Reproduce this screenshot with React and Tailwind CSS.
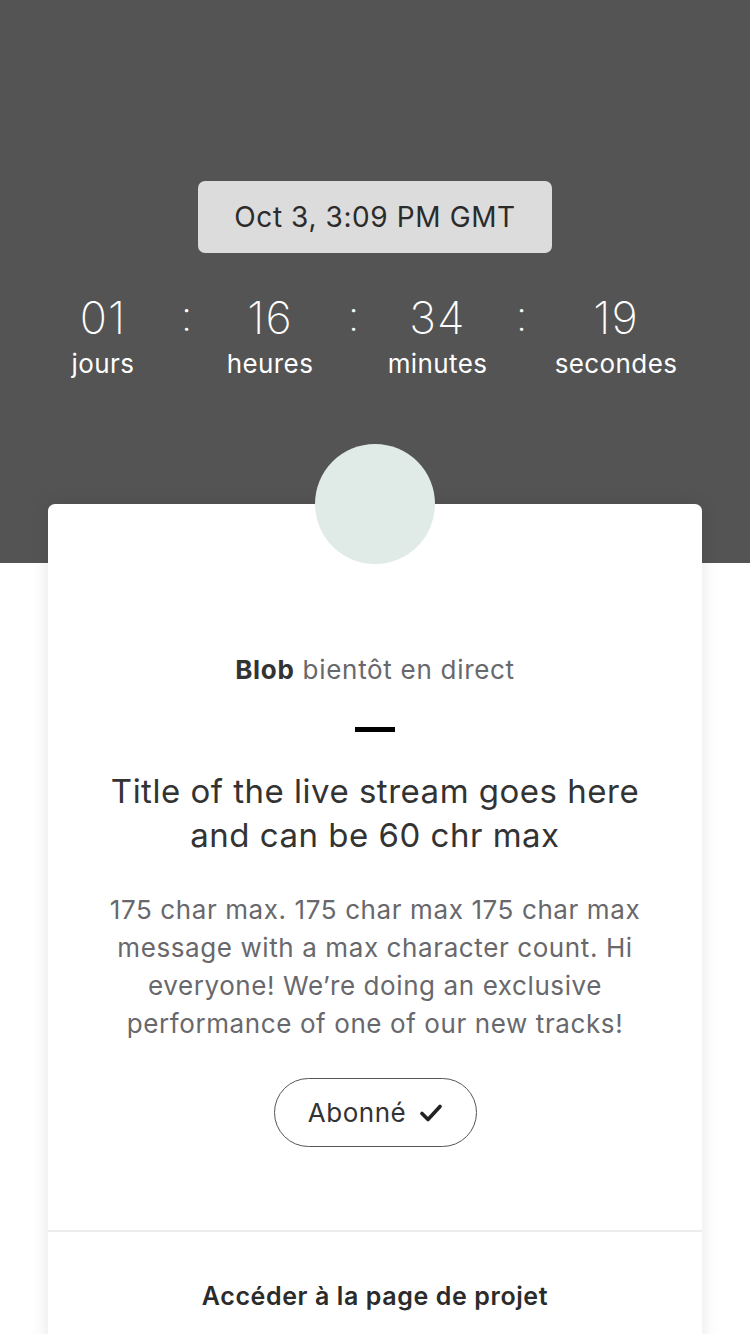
import React from "react";

const font = { fontFamily: "Inter, 'Noto Sans', sans-serif" };

function Unit({ value, label, w }) {
  return (
    <div className={`flex flex-col items-center ${w}`}>
      <div className="text-[45px] font-extralight leading-[52px] text-white tracking-[1px]">{value}</div>
      <div className="text-[26px] leading-[30px] text-white mt-[5px] tracking-[0.4px]">{label}</div>
    </div>
  );
}

function Colon() {
  return (
    <div className="w-[47px] flex justify-center text-[42px] font-extralight leading-[52px] text-white -mt-[2px]">:</div>
  );
}

export default function App() {
  return (
    <div className="w-[750px] h-[1334px] overflow-hidden bg-white" style={font}>
      <div className="bg-[#545454] h-[563px] flex flex-col items-center pt-[181px]">
        <div className="w-[354px] h-[72px] rounded-[7px] bg-[#dcdcdc] flex items-center justify-center text-[28px] tracking-[0.6px] text-[#2b2b2b]">
          Oct 3, 3:09 PM GMT
        </div>
        <div className="self-start flex items-start pl-[43px] mt-[39px]">
          <Unit value="01" label="jours" w="w-[120px]" />
          <Colon />
          <Unit value="16" label="heures" w="w-[120px]" />
          <Colon />
          <Unit value="34" label="minutes" w="w-[121px]" />
          <Colon />
          <Unit value="19" label="secondes" w="w-[142px]" />
        </div>
      </div>
      <div className="mx-[48px] -mt-[59px] bg-white rounded-t-[7px] shadow-[0_0_18px_rgba(0,0,0,0.10)] flex flex-col items-center relative">
        <div className="w-[120px] h-[120px] rounded-full bg-[#e0ebe7] -mt-[60px]"></div>
        <div className="mt-[89px] text-[26px] leading-[34px] tracking-[0.7px] text-[#68686c]">
          <span className="font-bold text-[#333]">Blob</span> bientôt en direct
        </div>
        <div className="w-[40px] h-[5px] bg-black mt-[40px]"></div>
        <div className="mt-[37px] text-[33px] leading-[44px] tracking-[0.5px] text-[#333] text-center">
          Title of the live stream goes here
          <br />
          and can be 60 chr max
        </div>
        <div className="mt-[34px] text-[26px] leading-[38px] tracking-[0.6px] text-[#68686c] text-center">
          175 char max. 175 char max 175 char max
          <br />
          message with a max character count. Hi
          <br />
          everyone! We’re doing an exclusive
          <br />
          performance of one of our new tracks!
        </div>
        <div className="mt-[35px] w-[203px] h-[69px] rounded-full border-[1.5px] border-[#555] flex items-center justify-center gap-[14px] text-[26px] tracking-[0.5px] text-[#333]">
          <span>Abonné</span>
          <svg width="22" height="18" viewBox="0 0 22 18" fill="none">
            <path d="M2 9.5 L8 15.5 L20 2.5" stroke="#222" strokeWidth="3.6" strokeLinecap="round" strokeLinejoin="round" />
          </svg>
        </div>
        <div className="mt-[83px] w-full h-[2px] bg-[#ececec]"></div>
        <div className="w-full flex justify-center pt-[48px] pb-[48px] text-[25px] leading-[32px] tracking-[0.6px] font-semibold text-[#2b2b2b]">
          Accéder à la page de projet
        </div>
      </div>
    </div>
  );
}
